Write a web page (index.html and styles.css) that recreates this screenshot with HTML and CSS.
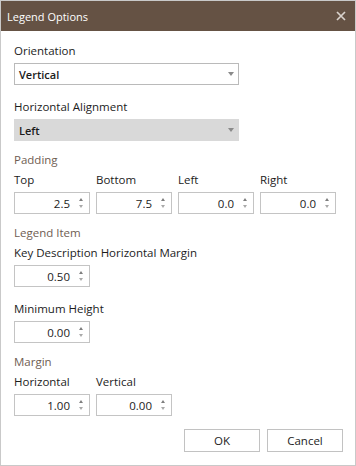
FILE: index.html
```html
<!DOCTYPE html>
<html lang="en">
<head>
  <meta charset="UTF-8" />
  <title>Legend Options</title>
  <link rel="stylesheet" href="styles.css">
</head>
<body>
  <div class="dialog">
    <div class="titlebar">
      <span class="title">Legend Options</span>
      <button class="close" aria-label="Close">
        <svg width="10" height="10" viewBox="0 0 10 10"><path d="M1 1 L9 9 M9 1 L1 9" stroke="#d9d2cc" stroke-width="1.7" fill="none"/></svg>
      </button>
    </div>

    <div class="content">
      <div class="label">Orientation</div>
      <div class="combo">Vertical<span class="caret"></span></div>

      <div class="label gap">Horizontal Alignment</div>
      <div class="combo disabled">Left<span class="caret"></span></div>

      <div class="section">Padding</div>
      <div class="row">
        <div class="col">
          <div class="label">Top</div>
          <div class="spin"><span>2.5</span><span class="arrows"><i class="up"></i><i class="down"></i></span></div>
        </div>
        <div class="col">
          <div class="label">Bottom</div>
          <div class="spin"><span>7.5</span><span class="arrows"><i class="up"></i><i class="down"></i></span></div>
        </div>
        <div class="col">
          <div class="label">Left</div>
          <div class="spin"><span>0.0</span><span class="arrows"><i class="up"></i><i class="down"></i></span></div>
        </div>
        <div class="col">
          <div class="label">Right</div>
          <div class="spin"><span>0.0</span><span class="arrows"><i class="up"></i><i class="down"></i></span></div>
        </div>
      </div>

      <div class="section">Legend Item</div>
      <div class="label">Key Description Horizontal Margin</div>
      <div class="spin"><span>0.50</span><span class="arrows"><i class="up"></i><i class="down"></i></span></div>

      <div class="label gap">Minimum Height</div>
      <div class="spin"><span>0.00</span><span class="arrows"><i class="up"></i><i class="down"></i></span></div>

      <div class="section">Margin</div>
      <div class="row">
        <div class="col">
          <div class="label">Horizontal</div>
          <div class="spin"><span>1.00</span><span class="arrows"><i class="up"></i><i class="down"></i></span></div>
        </div>
        <div class="col">
          <div class="label">Vertical</div>
          <div class="spin"><span>0.00</span><span class="arrows"><i class="up"></i><i class="down"></i></span></div>
        </div>
      </div>
    </div>

    <div class="actions">
      <button class="btn">OK</button>
      <button class="btn">Cancel</button>
    </div>
  </div>
</body>
</html>
```

FILE: styles.css
```css
* {
  box-sizing: border-box;
}

body {
  margin: 0;
  font-family: "Open Sans", "Segoe UI", sans-serif;
  font-size: 11.5px;
  color: #1c1c1c;
  background-color: #fff;
}

.dialog {
  width: 356px;
  height: 466px;
  border: 1px solid #c9c9c9;
  display: flex;
  flex-direction: column;
}

.titlebar {
  height: 30px;
  background-color: #655244;
  color: #fff;
  display: flex;
  align-items: center;
  justify-content: space-between;
  padding: 0 7px 0 6px;
}

.title {
  font-size: 11px;
}

.close {
  background: none;
  border: none;
  padding: 0;
  width: 14px;
  height: 14px;
  display: flex;
  align-items: center;
  justify-content: center;
}

.content {
  padding: 12px 13px 0 13px;
}

.label {
  line-height: 16px;
  margin-bottom: 4px;
}

.label.gap {
  margin-top: 14px;
}

.combo {
  width: 225px;
  height: 22px;
  border: 1px solid #bababa;
  display: flex;
  align-items: center;
  justify-content: space-between;
  padding: 0 4px 0 4px;
  font-weight: 600;
  font-size: 11px;
  color: #1a1a1a;
}

.combo.disabled {
  background-color: #d9d9d9;
  border-color: #d9d9d9;
}

.caret {
  width: 0;
  height: 0;
  border-left: 3.5px solid transparent;
  border-right: 3.5px solid transparent;
  border-top: 4px solid #8a8a8a;
}

.section {
  color: #6f5d52;
  line-height: 16px;
  margin-top: 11px;
  margin-bottom: 4px;
}

.row {
  display: flex;
  gap: 6px;
}

.col {
  width: 76px;
}

.spin {
  width: 76px;
  height: 22px;
  border: 1px solid #c4c4c4;
  display: flex;
  align-items: center;
  justify-content: flex-end;
  gap: 9px;
  padding-right: 6px;
}

.arrows {
  display: flex;
  flex-direction: column;
  gap: 4px;
  align-items: center;
}

.up, .down {
  width: 0;
  height: 0;
  border-left: 2.5px solid transparent;
  border-right: 2.5px solid transparent;
}

.up {
  border-bottom: 3px solid #7e7e7e;
}

.down {
  border-top: 3px solid #a9a9a9;
}

.actions {
  margin-top: auto;
  display: flex;
  justify-content: flex-end;
  gap: 7px;
  padding: 0 12px 13px 0;
}

.btn {
  width: 76px;
  height: 23px;
  background-color: #fff;
  border: 1px solid #c2c2c2;
  font-family: inherit;
  font-size: 11.5px;
  color: #1c1c1c;
  padding: 0;
}
```
